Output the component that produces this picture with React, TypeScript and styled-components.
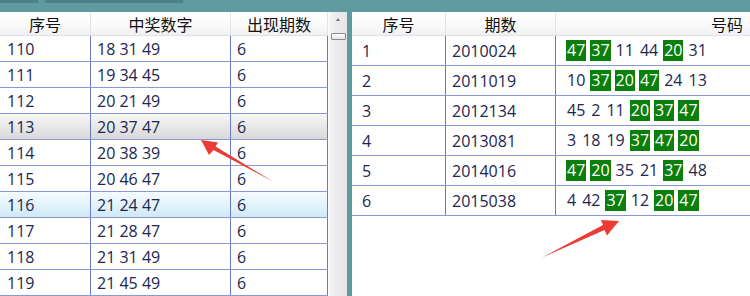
import React from "react";
import styled, { createGlobalStyle, css } from "styled-components";

const Global = createGlobalStyle`
  html, body { margin: 0; padding: 0; background: #5e9aa0; overflow: hidden; }
  body { font-family: "Open Sans", "Noto Sans CJK SC", sans-serif; }
`;

const Page = styled.div`
  position: relative;
  width: 750px;
  height: 296px;
  background: #5e9aa0;
  display: flex;
  flex-direction: column;
  overflow: hidden;
`;

const TopBar = styled.div`
  height: 12px;
  display: flex;
  gap: 7px;
  align-items: flex-start;
`;

const TabStrip = styled.div<{ $w: number }>`
  width: ${(p) => p.$w}px;
  height: 3px;
  background: #4d8186;
`;

const Main = styled.div`
  flex: 1;
  display: flex;
  gap: 5px;
  min-height: 0;
`;

const LeftPanel = styled.div`
  width: 347px;
  display: flex;
  background: #fff;
`;

const LeftTable = styled.div`
  width: 328px;
  display: flex;
  flex-direction: column;
`;

const ScrollBar = styled.div`
  width: 18px;
  margin-left: 1px;
  display: flex;
  flex-direction: column;
  align-items: center;
  background: linear-gradient(90deg, #f6f6f6 0%, #ececec 35%, #e6e6e6 100%);
`;

const ScrollUp = styled.div`
  height: 18px;
  display: flex;
  align-items: center;
  justify-content: center;
  &::before {
    content: "";
    border-left: 2px solid transparent;
    border-right: 2px solid transparent;
    border-bottom: 3px solid #707070;
    margin-top: -4px;
  }
`;

const Thumb = styled.div`
  width: 13px;
  height: 5px;
  margin-top: 3px;
  border: 1px solid #8c8c8c;
  border-radius: 1px;
  background: linear-gradient(#ffffff, #e4e4e4);
`;

const RightPanel = styled.div`
  flex: 1;
  background: #fff;
  display: flex;
  flex-direction: column;
`;

const HeaderRow = styled.div<{ $cols: string }>`
  display: grid;
  grid-template-columns: ${(p) => p.$cols};
  height: 24px;
  background: linear-gradient(#ffffff 0%, #fbfbfb 50%, #f1f1f3 100%);
  border-bottom: 1px solid #dfe1e6;
  box-sizing: border-box;
`;

const HeadCell = styled.div<{ $align?: "center" | "right" | "left"; $last?: boolean }>`
  display: flex;
  align-items: center;
  justify-content: ${(p) =>
    p.$align === "right" ? "flex-end" : p.$align === "left" ? "flex-start" : "center"};
  padding: 0 7px;
  font-size: 16px;
  color: #111;
  border-right: ${(p) => (p.$last ? "none" : "1px solid #e3e3e3")};
  white-space: nowrap;
`;

const Row = styled.div<{ $cols: string; $h: number; $state?: "selected" | "hover" }>`
  display: grid;
  grid-template-columns: ${(p) => p.$cols};
  height: ${(p) => p.$h}px;
  box-sizing: border-box;
  border-bottom: 1px solid #8b97d6;
  flex-shrink: 0;
  ${(p) =>
    p.$state === "selected" &&
    css`
      background: linear-gradient(#f8f8f8 0%, #e8e8e8 50%, #d8d8d8 100%);
    `}
  ${(p) =>
    p.$state === "hover" &&
    css`
      background: linear-gradient(#f5fbfe 0%, #e3f3fb 50%, #cfe9f7 100%);
    `}
`;

const Cell = styled.div<{ $pad: number; $last?: boolean }>`
  display: flex;
  align-items: center;
  padding-left: ${(p) => p.$pad}px;
  font-size: 16px;
  color: #22264f;
  border-right: ${(p) => (p.$last ? "none" : "1px solid #6a78c6")};
  white-space: nowrap;
`;

const Ball = styled.span<{ $hit: boolean }>`
  display: inline-block;
  line-height: 21px;
  padding: 0 1px;
  margin-right: 4px;
  ${(p) =>
    p.$hit &&
    css`
      background: #0b7f0b;
      color: #fff;
    `}
`;

const Overlay = styled.svg`
  position: absolute;
  left: 0;
  top: 0;
  pointer-events: none;
`;

const leftCols = "91px 140px 97px";
const rightCols = "94px 110px 1fr";

const leftData: [string, string, "selected" | "hover" | undefined][] = [
  ["110", "18 31 49", undefined],
  ["111", "19 34 45", undefined],
  ["112", "20 21 49", undefined],
  ["113", "20 37 47", "selected"],
  ["114", "20 38 39", undefined],
  ["115", "20 46 47", undefined],
  ["116", "21 24 47", "hover"],
  ["117", "21 28 47", undefined],
  ["118", "21 31 49", undefined],
  ["119", "21 45 49", undefined],
];

const rightData: [string, string, string][] = [
  ["1", "2010024", "47 37 11 44 20 31"],
  ["2", "2011019", "10 37 20 47 24 13"],
  ["3", "2012134", "45 2 11 20 37 47"],
  ["4", "2013081", "3 18 19 37 47 20"],
  ["5", "2014016", "47 20 35 21 37 48"],
  ["6", "2015038", "4 42 37 12 20 47"],
];

const hits = new Set(["20", "37", "47"]);

export default function App() {
  return (
    <Page>
      <Global />
      <TopBar>
        <TabStrip $w={38} />
        <TabStrip $w={138} />
      </TopBar>
      <Main>
        <LeftPanel>
          <LeftTable>
            <HeaderRow $cols={leftCols}>
              <HeadCell>序号</HeadCell>
              <HeadCell>中奖数字</HeadCell>
              <HeadCell>出现期数</HeadCell>
            </HeaderRow>
            {leftData.map(([id, nums, st]) => (
              <Row key={id} $cols={leftCols} $h={26} $state={st}>
                <Cell $pad={7}>{id}</Cell>
                <Cell $pad={6}>{nums}</Cell>
                <Cell $pad={6}>6</Cell>
              </Row>
            ))}
          </LeftTable>
          <ScrollBar>
            <ScrollUp />
            <Thumb />
          </ScrollBar>
        </LeftPanel>
        <RightPanel>
          <HeaderRow $cols={rightCols}>
            <HeadCell>序号</HeadCell>
            <HeadCell>期数</HeadCell>
            <HeadCell $align="right" $last>
              号码
            </HeadCell>
          </HeaderRow>
          {rightData.map(([id, period, nums]) => (
            <Row key={id} $cols={rightCols} $h={30}>
              <Cell $pad={10}>{id}</Cell>
              <Cell $pad={6}>{period}</Cell>
              <Cell $pad={10} $last>
                {nums.split(" ").map((n, i) => (
                  <Ball key={i} $hit={hits.has(n)}>
                    {n}
                  </Ball>
                ))}
              </Cell>
            </Row>
          ))}
        </RightPanel>
      </Main>
      <Overlay width={750} height={296} viewBox="0 0 750 296">
        <polygon
          points="201,140 218,142.5 215.5,146.5 273,181.5 213.5,150 209,155"
          fill="#ec3a35"
        />
        <polygon
          points="619,221 601,220 603,225 542,257.5 604.5,230 607,235.5"
          fill="#ec3a35"
        />
      </Overlay>
    </Page>
  );
}
